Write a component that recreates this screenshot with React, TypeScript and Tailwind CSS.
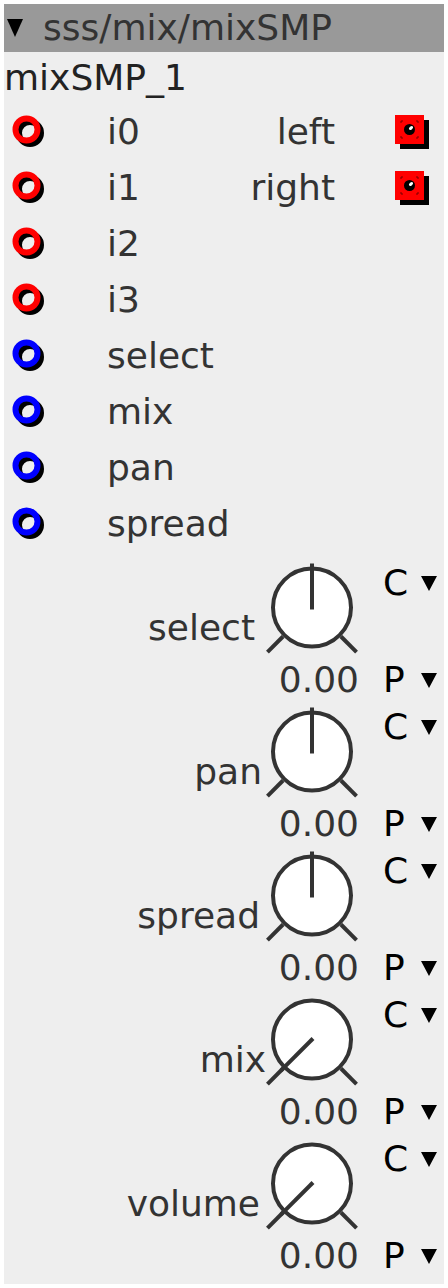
import React from "react";

const FONT = { fontFamily: '"DejaVu Sans", Verdana, sans-serif' };

function Inlet({ color }: { color: string }) {
  return (
    <svg width="38" height="38" viewBox="0 0 38 38" className="block">
      <circle cx="19" cy="20" r="11" fill="none" stroke="#000" strokeWidth="6" />
      <circle cx="15.5" cy="16.5" r="11" fill="none" stroke={color} strokeWidth="6" />
    </svg>
  );
}

function Outlet() {
  return (
    <svg width="35" height="35" viewBox="0 0 35 35" className="block">
      <rect x="5" y="5" width="29" height="29" fill="#000" />
      <rect x="0" y="0" width="29" height="29" fill="#ff0000" />
      <circle cx="14.5" cy="14.5" r="5.5" fill="#000" />
      <ellipse cx="16" cy="13" rx="2.4" ry="1.5" fill="#fff" transform="rotate(-40 16 13)" />
      <g stroke="#700" strokeWidth="1" fill="none">
        <path d="M6 8 V6 H8" />
        <path d="M21 6 H23 V8" />
        <path d="M6 21 V23 H8" />
        <path d="M21 23 H23 V21" />
      </g>
    </svg>
  );
}

function Tri({ w = 16, h = 15 }: { w?: number; h?: number }) {
  return (
    <svg width={w} height={h} viewBox={`0 0 ${w} ${h}`} className="block">
      <polygon points={`0,0 ${w},0 ${w / 2},${h}`} fill="#000" />
    </svg>
  );
}

function Knob({ bipolar }: { bipolar: boolean }) {
  const cx = 50;
  const cy = 55.5;
  const d = 0.7071;
  return (
    <svg width="100" height="112" viewBox="0 0 100 112" className="block">
      <circle cx={cx} cy={cy} r="39" fill="#fff" stroke="#333" strokeWidth="4" />
      <line x1={cx - 41 * d} y1={cy + 41 * d} x2={cx - 63 * d} y2={cy + 63 * d} stroke="#333" strokeWidth="4" />
      <line x1={cx + 41 * d} y1={cy + 41 * d} x2={cx + 63 * d} y2={cy + 63 * d} stroke="#333" strokeWidth="4" />
      {bipolar ? (
        <line x1={cx} y1={cy + 2} x2={cx} y2={cy - 44} stroke="#333" strokeWidth="4" />
      ) : (
        <line x1={cx + 1} y1={cy - 1} x2={cx - 44 * d} y2={cy + 44 * d} stroke="#333" strokeWidth="4" />
      )}
    </svg>
  );
}

function InRow({ name, color, out }: { name: string; color: string; out?: string }) {
  return (
    <div className="h-[56px] flex items-center">
      <div className="w-[103px] pl-[7px] flex items-center">
        <Inlet color={color} />
      </div>
      <div className="flex-1 text-[#333]">{name}</div>
      {out && (
        <>
          <div className="text-[#333] text-right pr-[60px]">{out}</div>
          <div className="w-[49px] flex items-center">
            <Outlet />
          </div>
        </>
      )}
    </div>
  );
}

function KnobBlock({ label, bipolar, pad }: { label: string; bipolar: boolean; pad: string }) {
  return (
    <div className="h-[144px] flex">
      <div className={`flex-1 text-right pt-[58px] leading-[36px] text-[#333] whitespace-nowrap ${pad}`}>{label}</div>
      <div className="w-[100px] flex flex-col">
        <Knob bipolar={bipolar} />
        <div className="h-[32px] leading-[32px] text-right pr-[3px] text-[#333] whitespace-nowrap">0.00</div>
      </div>
      <div className="w-[82px] flex flex-col justify-between pl-[21px]">
        <div className="flex items-center mt-[13px] h-[36px] leading-[36px] text-black">
          <span className="w-[38px]">C</span>
          <Tri />
        </div>
        <div className="flex items-center h-[32px] leading-[32px] text-black">
          <span className="w-[38px]">P</span>
          <Tri />
        </div>
      </div>
    </div>
  );
}

export default function App() {
  return (
    <div className="w-[448px] h-[1288px] bg-white p-[4px]" style={FONT}>
      <div className="h-[1280px] bg-[#eeeeee] flex flex-col text-[36px]">
        <div className="h-[48px] bg-[#999999] flex items-center pl-[3px]">
          <Tri w={16} h={18} />
          <span className="ml-[20px] text-[#333] leading-[48px]">sss/mix/mixSMP</span>
        </div>
        <div className="h-[52px] flex items-center text-[#222]">mixSMP_1</div>
        <InRow name="i0" color="#ff0000" out="left" />
        <InRow name="i1" color="#ff0000" out="right" />
        <InRow name="i2" color="#ff0000" />
        <InRow name="i3" color="#ff0000" />
        <InRow name="select" color="#0000ff" />
        <InRow name="mix" color="#0000ff" />
        <InRow name="pan" color="#0000ff" />
        <InRow name="spread" color="#0000ff" />
        <KnobBlock label="select" bipolar pad="pr-[7px]" />
        <KnobBlock label="pan" bipolar pad="pr-0" />
        <KnobBlock label="spread" bipolar pad="pr-[2px]" />
        <KnobBlock label="mix" bipolar={false} pad="mr-[-4px]" />
        <KnobBlock label="volume" bipolar={false} pad="pr-[2px]" />
      </div>
    </div>
  );
}
